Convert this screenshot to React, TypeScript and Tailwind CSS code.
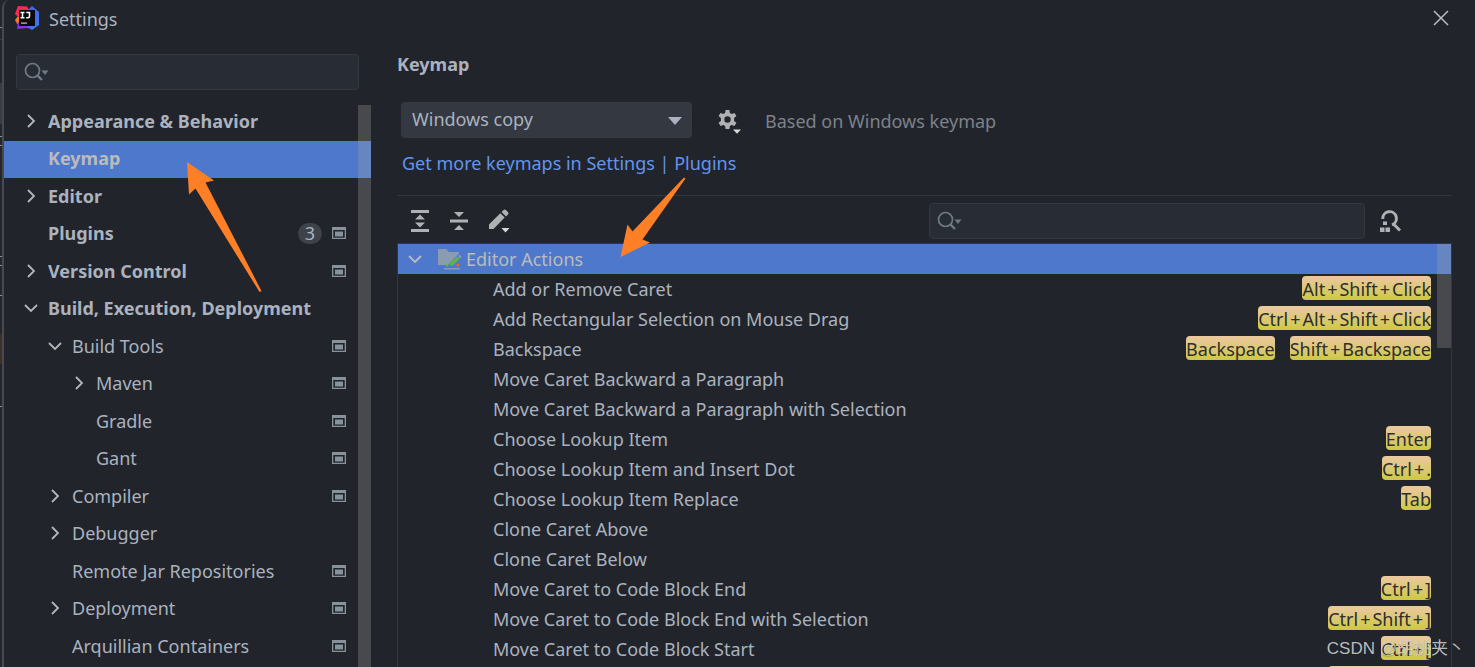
import { Fragment, useState } from "react"

type TreeItem = {
  label: string
  level: 0 | 1 | 2
  bold?: boolean
  open?: boolean
  closed?: boolean
  badge?: number
  project?: boolean
}

const tree: TreeItem[] = [
  { label: "Appearance & Behavior", level: 0, bold: true, closed: true },
  { label: "Keymap", level: 0, bold: true },
  { label: "Editor", level: 0, bold: true, closed: true },
  { label: "Plugins", level: 0, bold: true, badge: 3, project: true },
  { label: "Version Control", level: 0, bold: true, closed: true, project: true },
  { label: "Build, Execution, Deployment", level: 0, bold: true, open: true },
  { label: "Build Tools", level: 1, open: true, project: true },
  { label: "Maven", level: 2, closed: true, project: true },
  { label: "Gradle", level: 2, project: true },
  { label: "Gant", level: 2, project: true },
  { label: "Compiler", level: 1, closed: true, project: true },
  { label: "Debugger", level: 1, closed: true },
  { label: "Remote Jar Repositories", level: 1, project: true },
  { label: "Deployment", level: 1, closed: true, project: true },
  { label: "Arquillian Containers", level: 1, project: true },
]

const actions: { name: string; keys: string[] }[] = [
  { name: "Add or Remove Caret", keys: ["Alt+Shift+Click"] },
  { name: "Add Rectangular Selection on Mouse Drag", keys: ["Ctrl+Alt+Shift+Click"] },
  { name: "Backspace", keys: ["Backspace", "Shift+Backspace"] },
  { name: "Move Caret Backward a Paragraph", keys: [] },
  { name: "Move Caret Backward a Paragraph with Selection", keys: [] },
  { name: "Choose Lookup Item", keys: ["Enter"] },
  { name: "Choose Lookup Item and Insert Dot", keys: ["Ctrl+."] },
  { name: "Choose Lookup Item Replace", keys: ["Tab"] },
  { name: "Clone Caret Above", keys: [] },
  { name: "Clone Caret Below", keys: [] },
  { name: "Move Caret to Code Block End", keys: ["Ctrl+]"] },
  { name: "Move Caret to Code Block End with Selection", keys: ["Ctrl+Shift+]"] },
  { name: "Move Caret to Code Block Start", keys: ["Ctrl+["] },
  { name: "Move Caret to Code Block Start with Selection", keys: ["Ctrl+Shift+["] },
]

const indent = { 0: "pl-5", 1: "pl-11", 2: "pl-17" }

function Chevron({ open }: { open?: boolean }) {
  return (
    <svg viewBox="0 0 14 14" className="h-[14px] w-[14px] shrink-0" fill="none" stroke="currentColor" strokeWidth="1.8">
      <path d={open ? "M1 4l6 6 6-6" : "M4 1l6 6-6 6"} />
    </svg>
  )
}

function SearchIcon() {
  return (
    <svg viewBox="0 0 26 20" className="pointer-events-none absolute top-2 left-2 h-5 w-[26px]" fill="none">
      <circle cx="8.5" cy="8.5" r="7" stroke="#6f7a85" strokeWidth="1.7" />
      <path d="M13.3 13.3l4.700 4.700" stroke="#6f7a85" strokeWidth="2.4" />
      <path d="M17.500 8.500h7l-3.500 4.500z" fill="#6f7a85" />
    </svg>
  )
}

function ProjectIcon() {
  return (
    <svg viewBox="0 0 14 12" className="h-3 w-[14px] shrink-0">
      <path fillRule="evenodd" fill="#87939a" d="M0 0h14v12H0zM1.3 3v7.7h11.4V3z" />
      <path fill="#87939a" d="M3 4.5h8v5H3z" />
    </svg>
  )
}

function IdeaLogo() {
  return (
    <svg viewBox="0 0 24 24" className="mb-0.5 h-6 w-6">
      <defs>
        <linearGradient id="idea-left" x1="0" y1="0" x2="0" y2="1">
          <stop offset="0" stopColor="#ff8a1f" />
          <stop offset="0.55" stopColor="#f97a12" />
          <stop offset="1" stopColor="#9135e0" />
        </linearGradient>
        <linearGradient id="idea-top" x1="0" y1="0" x2="1" y2="1">
          <stop offset="0" stopColor="#fe2857" />
          <stop offset="0.6" stopColor="#fe2857" />
          <stop offset="1" stopColor="#9a3fd0" />
        </linearGradient>
        <linearGradient id="idea-right" x1="0" y1="0" x2="0" y2="1">
          <stop offset="0" stopColor="#4b62e8" />
          <stop offset="1" stopColor="#3a7af5" />
        </linearGradient>
      </defs>
      <path fill="url(#idea-left)" d="M0 14l4-5 2 11-4-2z" />
      <path fill="#8d35cf" d="M3 17h7l6 6-4-1-10 1z" />
      <path fill="url(#idea-top)" d="M3 0l9 .5 3 5-9 8L0 8z" />
      <path fill="url(#idea-right)" d="M17 0l7 6v13l-7 5-5-4 1-16z" />
      <path fill="#0b0b0d" d="M4 4h16v16H4z" />
      <path stroke="#fff" strokeWidth="1.5" fill="none" d="M5.5 6.5h4M7.5 6.5v5M5.5 11.7h4M11.3 6.5h3.2v3.8q0 1.5-1.5 1.5h-1.8" />
      <path fill="#c8c8c8" d="M6 16.5h6v1.2H6z" />
    </svg>
  )
}

function GearIcon() {
  return (
    <svg viewBox="0 0 24 24" className="h-6 w-6" fill="#afb1b3">
      <path
        fillRule="evenodd"
        d="M7.6 0h3.8l.5 2.9 1.8 1 2.8-1 1.9 3.2-2.3 1.9v2.9l2.3 1.9-1.9 3.2-2.8-1-1.8 1-.5 3H7.6l-.5-3-1.8-1-2.8 1-1.9-3.2 2.3-1.9V8L.6 6.100l1.9-3.200 2.8 1 1.8-1zM9.500 6.300a3.200 3.200 0 1 0 0 6.400 3.200 3.200 0 0 0 0-6.400z"
      />
      <path fill="#d8d8d8" d="M15 19.500h8l-4 4.300z" />
    </svg>
  )
}

function ExpandIcon() {
  return (
    <svg viewBox="0 0 18 22" className="h-[22px] w-[18px]" fill="#afb1b3">
      <path d="M0 0h18v3H0zM0 19h18v3H0zM9 4.500l5 5H4zM9 17.500l5-5H4z" />
    </svg>
  )
}

function CollapseIcon() {
  return (
    <svg viewBox="0 0 18 22" className="h-[22px] w-[18px]" fill="#afb1b3">
      <path d="M0 9.500h18v3H0zM4 2h10l-5 5zM4 20h10l-5-5z" />
    </svg>
  )
}

function PencilIcon() {
  return (
    <svg viewBox="0 0 22 24" className="h-6 w-[22px]" fill="#afb1b3">
      <path d="M0 15.500L11.300 4.200l4.400 4.400L4.500 20H0zM12.600 2.900l1.700-1.700q1.400-1.400 2.800 0l1.700 1.700q1.400 1.400 0 2.800L17 7.400z" />
      <path fill="#d8d8d8" d="M12.500 19h8l-4 4.500z" />
    </svg>
  )
}

function FindShortcutIcon() {
  return (
    <svg viewBox="0 0 22 22" className="h-[22px] w-[22px]" fill="#afb1b3">
      <path fill="none" stroke="#afb1b3" strokeWidth="3" d="M2.800 9A6.800 6.800 0 1 1 12 14.800M13.500 14l6.500 6.500" />
      <path d="M3 11.500h4V15H3zM0 17.500h4.500V22H0zM5.500 17.500H10V22H5.500z" />
    </svg>
  )
}

function ActionsFolderIcon() {
  return (
    <svg viewBox="0 0 24 22" className="h-[22px] w-6 shrink-0">
      <path fill="#8b9cb0" d="M0 1h8l3 3h10v1.500L10 17H0z" />
      <path fill="#62b543" d="M12 15l7-6.500 2.500 2.500-6.500 6.500H12z" />
      <path fill="#8b9cb0" d="M20 8l1.500-1.500L23.500 9 22.500 10.500zM6 20h16v1.600H6z" />
      <circle cx="9" cy="17" r="1.600" fill="#62b543" />
      <circle cx="20" cy="17" r="1.600" fill="#f26522" />
    </svg>
  )
}

/* sliver of the editor window that stays visible left of the dialog */
function EditorEdge() {
  return (
    <svg viewBox="0 0 2 667" className="h-[667px] w-[2px] shrink-0" preserveAspectRatio="none">
      <path fill="#25262c" d="M0 0h2v667H0z" />
      <path fill="#3a3c44" d="M0 39h2v1H0zM0 83h2v41H0z" />
      <path fill="#8b909a" d="M0 27h2v1H0zM0 136h2v1H0zM0 145h2v1H0zM0 256h2v1H0zM0 265h2v1H0zM0 295h2v1H0zM0 406h2v1H0z" />
      <path fill="#3d3028" d="M0 334h2v30H0z" />
    </svg>
  )
}

function Shortcut({ keys }: { keys: string }) {
  return (
    <kbd className="h-6 rounded bg-linear-to-b from-[#ecc8a0] to-[#cdc93c] font-[inherit] leading-[26px] whitespace-nowrap text-[#2e2e2e]">
      {keys.split("+").map((part, i) => (
        <Fragment key={part}>
          {i > 0 && <span className="px-0.5">+</span>}
          {part}
        </Fragment>
      ))}
    </kbd>
  )
}

function Arrows() {
  return (
    <svg className="pointer-events-none absolute top-0 left-0 h-[300px] w-[700px]" viewBox="0 0 700 300" fill="#ff7f27">
      <path d="M187 162l27 18.500-8.500 2L261.500 291l-2 1-64-103.500-6.500 6z" />
      <path d="M620.500 257l7-32.500 5 7L684 177.500l1.500 1-43 61 7.500 3z" />
    </svg>
  )
}

export default function App() {
  const [selected, setSelected] = useState("Keymap")

  return (
    <div className="relative flex h-screen overflow-hidden bg-[#25262c] font-['Noto_Sans','Noto_Sans_CJK_SC',sans-serif] text-lg leading-6 text-[#abb2bf]">
      <EditorEdge />
      <div className="flex min-w-0 flex-1 flex-col rounded-tl-lg border-l-2 border-[#48494c] bg-[#21252b]">
        <header className="flex h-[38px] shrink-0 items-center pr-[22px] pl-[11px]">
          <IdeaLogo />
          <h1 className="ml-[10px] flex-1">Settings</h1>
          <button aria-label="Close" className="mb-0.5 flex h-6 w-6 items-center justify-center text-[#b8bcc4]">
            <svg viewBox="0 0 16 16" className="h-4 w-4" stroke="currentColor" strokeWidth="1.500">
              <path d="M1 1l14 14M15 1L1 15" />
            </svg>
          </button>
        </header>

        <div className="flex min-h-0 flex-1">
          <aside className="flex w-[367px] shrink-0 flex-col pt-4">
            <div className="relative mr-3 ml-3">
              <input
                type="text"
                aria-label="Search settings"
                className="block h-9 w-full rounded border border-[#333841] bg-[#282c34] pr-2 pl-10 outline-none"
              />
              <SearchIcon />
            </div>

            <div className="relative mt-[13px] min-h-0 flex-1 overflow-hidden">
              <ul>
                {tree.map((item) => (
                  <li key={item.label} className="odd:h-[38px] even:h-[37px]">
                    <button
                      onClick={() => setSelected(item.label)}
                      className={`flex h-full w-full items-center pr-[25px] pb-[3px] text-left ${indent[item.level]} ${item.bold ? "font-bold" : ""} ${
                        item.label === selected ? "bg-[#4d78cc] text-[#bbbbbb]" : ""
                      }`}
                    >
                      <span className="w-6 shrink-0 text-[#b4b6b8]">{(item.open || item.closed) && <Chevron open={item.open} />}</span>
                      <span className="flex-1 whitespace-nowrap">{item.label}</span>
                      {item.badge && (
                        <span className="mr-[10px] flex h-[21px] w-6 items-center justify-center rounded-full bg-[#3d424b] font-normal">{item.badge}</span>
                      )}
                      {item.project && <ProjectIcon />}
                    </button>
                  </li>
                ))}
              </ul>
              <div className="absolute top-0.5 right-0 bottom-0 w-[13px] bg-[#aca9a1]/28" />
            </div>
          </aside>

          <main className="flex min-w-0 flex-1 flex-col pt-[14px] pr-[23px] pl-[26px]">
            <h2 className="font-bold">Keymap</h2>

            <div className="mt-[26px] ml-1 flex items-center">
              <div className="relative w-[291px]">
                <select aria-label="Keymap" className="block h-9 w-full appearance-none rounded bg-[#333841] px-[11px] pb-0.5 outline-none">
                  <option>Windows copy</option>
                </select>
                <svg viewBox="0 0 14 8" className="pointer-events-none absolute top-[15px] right-[10px] h-2 w-[14px]" fill="#abb2bf">
                  <path d="M0 0h14L7 8z" />
                </svg>
              </div>
              <button aria-label="Keymap options" className="mt-1 ml-[26px]">
                <GearIcon />
              </button>
              <span className="mt-0.5 ml-[23px] text-[#7d818a]">Based on Windows keymap</span>
            </div>

            <a href="#plugins" className="mt-[13px] ml-[5px] self-start text-[#6494ed]">
              Get more keymaps in Settings | Plugins
            </a>

            <div className="mt-5 flex items-center border-t border-[#32363d] pt-[7px] pb-1 pl-[14px]">
              <button aria-label="Expand all">
                <ExpandIcon />
              </button>
              <button aria-label="Collapse all" className="ml-[21px]">
                <CollapseIcon />
              </button>
              <button aria-label="Edit shortcut" className="ml-[21px]">
                <PencilIcon />
              </button>
              <div className="relative ml-auto w-[436px]">
                <input
                  type="text"
                  aria-label="Search actions"
                  className="block h-9 w-full rounded border border-[#333841] bg-[#282c34] pr-2 pl-10 outline-none"
                />
                <SearchIcon />
              </div>
              <button aria-label="Find actions by shortcut" className="mr-[50px] ml-[15px]">
                <FindShortcutIcon />
              </button>
            </div>

            <div className="relative min-h-0 flex-1 overflow-hidden border border-b-0 border-[#32363d]">
              <table className="w-full border-collapse">
                <tbody>
                  <tr className="h-[30px] bg-[#4d78cc] text-[#bbbbbb]">
                    <th colSpan={2} scope="rowgroup" className="p-0 text-left font-normal">
                      <div className="flex items-center pl-[10px]">
                        <Chevron open />
                        <span className="ml-4 flex items-center gap-1">
                          <ActionsFolderIcon />
                          Editor Actions
                        </span>
                      </div>
                    </th>
                  </tr>
                  {actions.map((action) => (
                    <tr key={action.name} className="h-[30px]">
                      <td className="p-0 pl-[95px] whitespace-nowrap">{action.name}</td>
                      <td className="p-0 pr-5 pb-0.5">
                        <div className="flex justify-end gap-[15px]">
                          {action.keys.map((keys) => (
                            <Shortcut key={keys} keys={keys} />
                          ))}
                        </div>
                      </td>
                    </tr>
                  ))}
                </tbody>
              </table>
              <div className="absolute top-0 right-0 h-[104px] w-[14px] bg-[#aca9a1]/28" />
            </div>
          </main>
        </div>
      </div>

      <Arrows />
      <p className="absolute right-[10px] bottom-1.5 font-['Liberation_Sans','Noto_Sans_CJK_SC',sans-serif] text-[17px] leading-6 text-[#d0d0d0]/90 text-shadow-2xs">
        CSDN @胡桃夹丶
      </p>
    </div>
  )
}
